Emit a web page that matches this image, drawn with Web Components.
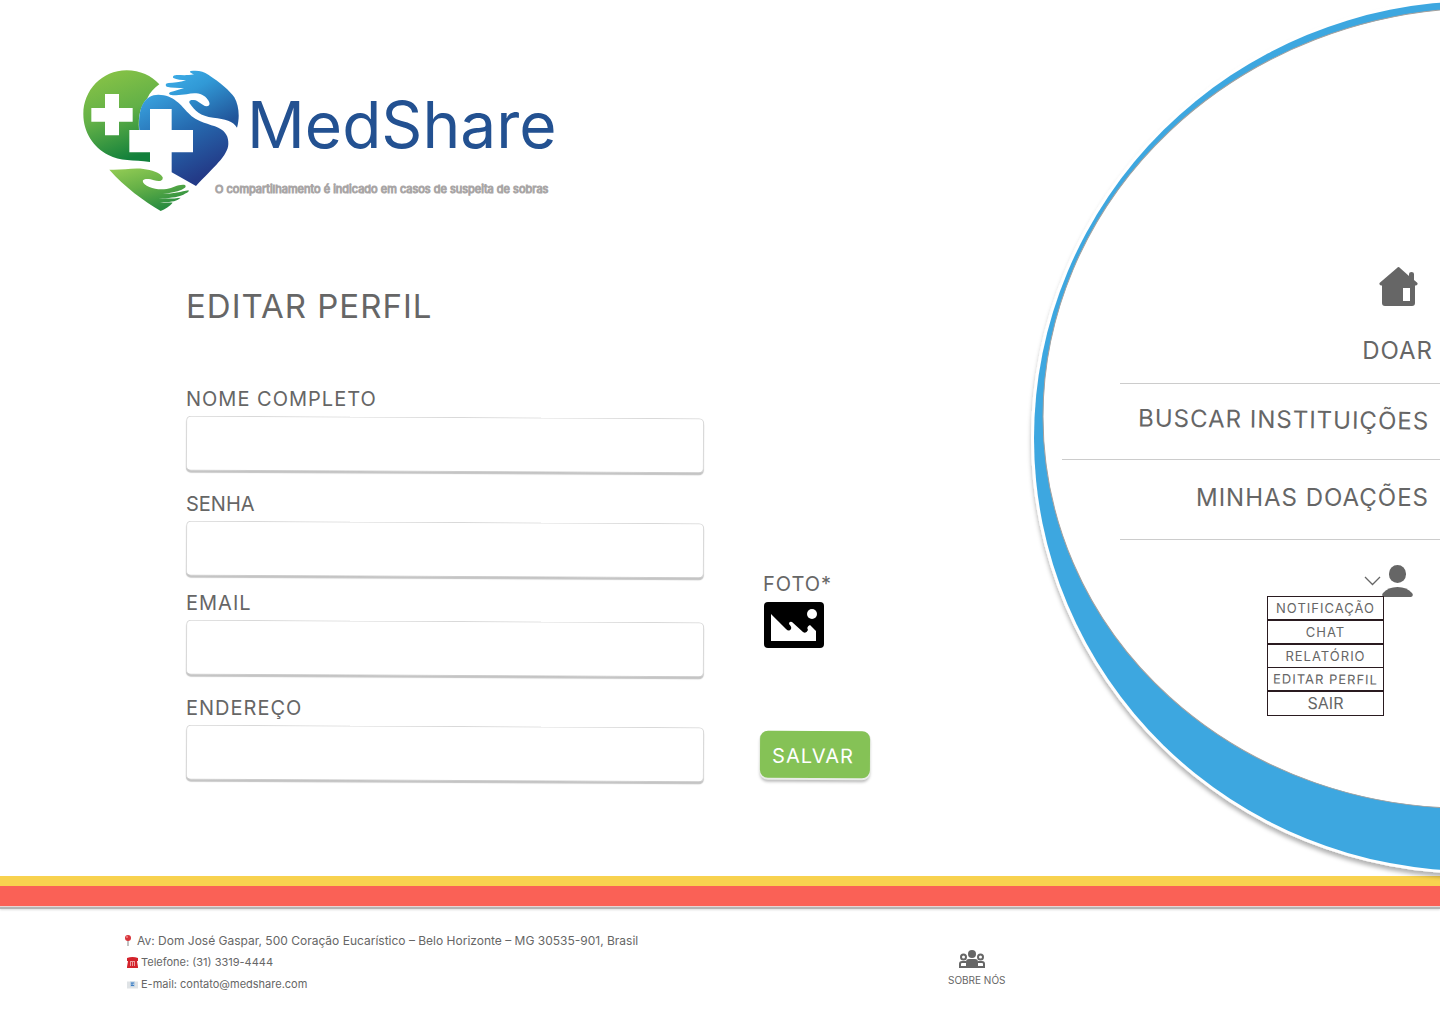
<!DOCTYPE html>
<html lang="pt-BR">
<head>
<meta charset="utf-8">
<title>MedShare – Editar perfil</title>
<style>
  body { margin: 0; background: #fff; color: #666; font-family: Inter, "Liberation Sans", sans-serif; }
</style>
</head>
<body>
<ms-page>
  <ms-brand slot="brand" name="MedShare">O compartilhamento é indicado em casos de suspeita de sobras</ms-brand>
  <ms-profile-form slot="content"></ms-profile-form>
  <ms-nav slot="nav"></ms-nav>
  <ms-footer slot="footer"></ms-footer>
</ms-page>

<script>
class Base extends HTMLElement {
  connectedCallback() {
    if (this.shadowRoot) return;
    this.attachShadow({ mode: 'open' }).innerHTML =
      '<style>*,*::before{box-sizing:border-box}:host{display:block}</style>' + this.view();
  }
}

customElements.define('ms-page', class extends Base {
  view() {
    return `<style>
      :host { display: flex; flex-direction: column; min-height: 100vh; overflow-x: clip; }
      .top { display: grid; grid-template-columns: minmax(0, 1fr) 410px; }
      main { padding: 70px 0 95px 83px; }
      .content { padding: 75px 0 0 103px; }
      .bands { height: 30px; background: linear-gradient(#f8d24f 10px, #fa6156 10px); box-shadow: 0 1px 0 #e8d5d3, 0 3px 0 #b4b4b4, 0 4px 2px #ddd; }
    </style>
    <div class="top">
      <main><slot name="brand"></slot><div class="content"><slot name="content"></slot></div></main>
      <slot name="nav"></slot>
    </div>
    <div class="bands"></div>
    <slot name="footer"></slot>`;
  }
});

customElements.define('ms-brand', class extends Base {
  view() {
    return `<style>
      :host { display: grid; grid-template-columns: 132px 32px 1fr; grid-template-rows: 112px 29px; }
      svg { grid-area: 1 / 1 / 3 / 3; width: 156px; height: 141px; }
      .name { grid-area: 1 / 3; font-size: 64px; line-height: 110px; color: #235191; }
      .tag { grid-area: 2 / 2 / 3 / 4; font-size: 11px; line-height: 14px; color: #a9a6a6; -webkit-text-stroke: 1px #a9a6a6; white-space: nowrap; }
    </style>
    <svg viewBox="39 43 468 423" aria-hidden="true">
      <defs>
        <linearGradient id="g" x1=".2" y1="0" x2=".5" y2="1"><stop offset="0" stop-color="#8ac446"/><stop offset=".5" stop-color="#62b047"/><stop offset="1" stop-color="#12803b"/></linearGradient>
        <linearGradient id="b" x1="0" y1="0" x2=".5" y2="1"><stop offset="0" stop-color="#3aa7e3"/><stop offset=".5" stop-color="#266bb0"/><stop offset="1" stop-color="#233a87"/></linearGradient>
        <linearGradient id="h" x1="0" y1="0" x2=".7" y2="1"><stop offset="0" stop-color="#3fb0ea"/><stop offset=".4" stop-color="#3199d6"/><stop offset="1" stop-color="#21559a"/></linearGradient>
        <linearGradient id="l" x1="0" y1="0" x2=".5" y2="1"><stop offset="0" stop-color="#95cd55"/><stop offset=".5" stop-color="#66b147"/><stop offset="1" stop-color="#2a8d40"/></linearGradient>
      </defs>
      <path fill="url(#g)" d="M268 86C245 60 210 44 170 44C95 44 40 105 40 175C40 230 70 275 115 298C150 317 190 312 240 319V290H178V223H207C204 180 212 148 232 128C240 110 252 98 268 86Z"/>
      <path fill="#fff" d="M105 115h42v42h41v41h-41v41h-42v-41h-41v-41h41z"/>
      <path fill="url(#b)" d="M208 223C203 150 225 118 265 117C310 117 335 150 355 172C380 200 420 205 445 216C468 226 476 245 475 265C474 300 430 335 378 391L305 350V290H369V223H305V160H240V223Z"/>
      <path fill="url(#h)" d="M501 216C490 196 465 190 430 186C390 182 375 165 359 143C355 135 362 132 372 133C385 134 395 150 410 152C420 152 421 143 414 133C400 112 375 110 350 116C335 118 315 120 300 117C294 114 298 109 305 108C315 106 330 100 342 97C325 96 305 97 290 93C284 88 288 82 296 82C310 82 330 80 348 74C335 73 320 72 310 67C306 62 312 58 320 58C335 58 350 60 372 56C364 53 356 49 362 46C385 43 400 47 415 57C450 80 480 105 493 125C507 150 510 185 501 216Z"/>
      <path fill="url(#l)" d="M118 342C150 345 190 335 220 340C245 343 270 350 278 365C280 378 265 378 252 374C240 370 225 368 219 374C216 380 225 388 238 394C255 402 275 402 290 400C310 397 325 385 345 388C350 393 345 398 335 402C320 408 300 412 278 415C310 414 335 408 355 404C360 408 350 412 340 417C320 426 295 427 265 428C295 430 318 428 332 426C322 437 300 440 270 439C285 442 300 440 308 441C300 452 285 460 272 466C220 435 165 395 118 342Z"/>
    </svg>
    <span class="name">${this.getAttribute('name')}</span>
    <span class="tag"><slot></slot></span>`;
  }
});

customElements.define('ms-field', class extends Base {
  view() {
    return `<style>
      :host { display: flex; flex-direction: column; gap: 6px; }
      label { font-size: 20px; line-height: 24px; letter-spacing: 1px; }
      :host([type="password"]) label { letter-spacing: 0; }
      input { width: 100%; height: 55px; padding: 0 16px; font: inherit; font-size: 18px; color: #666; background: #fff; border: 1px solid #d9d9d9; border-bottom-color: #ccc; border-radius: 5px; box-shadow: 0 2px 1px #c4c4c4; outline: none; transform: rotate(.3deg); }
    </style>
    <label for="f">${this.getAttribute('label')}</label>
    <input id="f" type="${this.getAttribute('type') || 'text'}">`;
  }
});

customElements.define('ms-photo', class extends Base {
  view() {
    return `<style>
      label { display: flex; flex-direction: column; gap: 6px; font-size: 20px; line-height: 24px; letter-spacing: 1px; cursor: pointer; }
      input { position: absolute; width: 1px; height: 1px; opacity: 0; }
      svg { width: 61px; height: 46px; }
    </style>
    <label for="p">FOTO*
      <svg viewBox="0 0 61 46" aria-hidden="true"><rect x="1" width="60" height="46" rx="4"/><circle cx="49" cy="12" r="5" fill="#fff"/><path fill="#fff" d="M8 12L23 27Q26 30 28 27Q29 25 26 22Q26 19 29 20L40 30Q43 32 45 28Q43 25 47 23L53 29V39H8Z"/></svg>
    </label><input id="p" type="file" accept="image/*">`;
  }
});

customElements.define('ms-button', class extends Base {
  view() {
    return `<style>
      button { width: 110px; height: 47px; padding: 2px 4px 0 0; border: 0; border-radius: 8px; background: #85c256; color: #fff; font: inherit; font-size: 20px; letter-spacing: 1px; box-shadow: 0 1px 0 1px #e9ece7, 0 4px 3px #bbb; transform: rotate(.3deg); cursor: pointer; }
    </style><button type="button"><slot></slot></button>`;
  }
});

customElements.define('ms-profile-form', class extends Base {
  view() {
    return `<style>
      h1 { margin: 0 0 61px; font-size: 33px; line-height: 40px; font-weight: 400; letter-spacing: 1px; }
      form { display: grid; grid-template-columns: minmax(0, 518px) 110px; gap: 56px; }
      .fields, .side { display: flex; flex-direction: column; }
      .fields { gap: 14px; }
      .group { display: flex; flex-direction: column; gap: 20px; }
      .side { justify-content: flex-end; gap: 83px; padding-bottom: 3px; }
      ms-photo { padding-left: 3px; }
    </style>
    <h1>EDITAR PERFIL</h1>
    <form>
      <div class="fields">
        <div class="group"><ms-field label="NOME COMPLETO"></ms-field><ms-field label="SENHA" type="password"></ms-field></div>
        <div class="group"><ms-field label="EMAIL" type="email"></ms-field><ms-field label="ENDEREÇO"></ms-field></div>
      </div>
      <div class="side"><ms-photo></ms-photo><ms-button>SALVAR</ms-button></div>
    </form>`;
  }
});

customElements.define('ms-account-menu', class extends Base {
  view() {
    return `<style>
      :host { display: flex; flex-direction: column; align-items: flex-end; }
      button { display: flex; align-items: center; gap: 1px; margin-right: 27px; padding: 0; border: 0; background: none; }
      ul { width: 117px; margin: -1px 56px 0 0; padding: 0; list-style: none; border: solid #2a1b20; border-width: 1px 1px 0; }
      li { border-bottom: 1px solid #2a1b20; }
      li.thick { border-bottom-width: 2px; }
      a { display: block; text-align: center; font-size: 13px; line-height: 22px; letter-spacing: 1px; color: #666; text-decoration: none; white-space: nowrap; }
      .tilt { transform: rotate(.5deg); }
      .big { font-size: 16px; line-height: 23px; letter-spacing: 0; }
    </style>
    <button type="button" aria-label="Conta" aria-expanded="true">
      <svg width="17" height="10" viewBox="0 0 17 10" fill="none" stroke="#666"><path stroke-width="1.300" d="M1 1l7.500 7.500L16 1"/></svg>
      <svg width="31" height="32" viewBox="0 0 31 32" fill="#666"><rect x="7" width="17" height="18" rx="8.500"/><path d="M2 32Q-1 31 1 28Q6 22 15.500 22T30 28Q32 31 29 32Z"/></svg>
    </button>
    <ul>
      <li class="thick"><a href="#">NOTIFICAÇÃO</a></li><li class="thick"><a href="#">CHAT</a></li><li><a href="#">RELATÓRIO</a></li>
      <li class="thick"><a href="#" class="tilt">EDITAR PERFIL</a></li><li><a href="#" class="big">SAIR</a></li>
    </ul>`;
  }
});

customElements.define('ms-nav', class extends Base {
  view() {
    return `<style>
      :host { position: relative; }
      .disc { position: absolute; top: 0; right: 0; width: 420px; height: 900px; pointer-events: none; }
      nav { position: relative; display: flex; flex-direction: column; align-items: flex-end; padding-top: 267px; }
      .home { display: block; margin-right: 22px; height: 39px; }
      .link { color: #666; font-size: 24px; letter-spacing: 1px; text-decoration: none; white-space: nowrap; padding-right: 11px; }
      .doar { line-height: 64px; margin-top: 13px; padding-right: 7px; }
      .buscar { line-height: 71px; padding-bottom: 4px; transform: rotate(.6deg); }
      .minhas { line-height: 75px; padding-bottom: 4px; }
      hr { width: 320px; height: 1px; margin: 0; border: 0; background: #ccc; }
      hr.long { width: 378px; }
      ms-account-menu { margin-top: 25px; }
    </style>
    <svg class="disc" viewBox="1020 0 420 900" aria-hidden="true">
      <defs>
        <filter id="s" x="-5%" y="-5%" width="110%" height="110%"><feDropShadow dx="0" dy="4" stdDeviation="2" flood-opacity=".3"/></filter>
      </defs>
      <g filter="url(#s)"><ellipse rx="445" ry="438" fill="#fff" transform="translate(1476 436) skewY(-.3)"/></g>
      <ellipse rx="442" ry="435" fill="#3da7e0" transform="translate(1476 436) skewY(-.3)"/>
      <ellipse rx="432" ry="400" fill="#fff" stroke="#a4a09d" transform="translate(1475 408) skewY(-1.150)"/>
    </svg>
    <nav>
      <a class="home" href="#" aria-label="Início"><svg width="39" height="39" viewBox="0 0 39 39" fill="#666"><path fill-rule="evenodd" d="M18 1Q19.500-1 21 1L30 9V7Q30 5 32.500 5Q35 5 35 7V13L38.500 16Q39 19 36 18.500V36Q36 39 33 39H6Q3 39 3 36V18.500Q0 19 .5 16ZM24 21V34H31V21Z"/></svg></a>
      <a class="link doar" href="#">DOAR</a><hr>
      <a class="link buscar" href="#">BUSCAR INSTITUIÇÕES</a><hr class="long">
      <a class="link minhas" href="#">MINHAS DOAÇÕES</a><hr>
      <ms-account-menu></ms-account-menu>
    </nav>`;
  }
});

customElements.define('ms-footer', class extends Base {
  view() {
    return `<style>
      footer { display: grid; grid-template-columns: minmax(0, 1fr) 492px; padding: 26px 0 20px 122px; }
      address { display: flex; flex-direction: column; gap: 5px; font-style: normal; font-size: 11px; line-height: 17px; }
      .row { display: flex; align-items: center; gap: 3px; padding-left: 5px; }
      .first { font-size: 12px; padding-left: 0; gap: 4px; }
      a { color: #666; text-decoration: none; }
      .about { justify-self: start; display: flex; flex-direction: column; align-items: center; gap: 6px; padding-top: 18px; font-size: 10px; line-height: 12px; }
      .about svg { margin-right: 10px; }
    </style>
    <footer>
      <address>
        <div class="row first"><svg width="11" height="12" viewBox="0 0 11 12"><path stroke="#999" stroke-width="1.200" d="M6 5V11"/><circle cx="6" cy="3" r="3" fill="#d8343b"/><circle cx="5" cy="2" r="1" fill="#f08a8a"/></svg><span>Av: Dom José Gaspar, 500 Coração Eucarístico – Belo Horizonte – MG 30535-901, Brasil</span></div>
        <div class="row"><svg width="11" height="11" viewBox="0 0 11 11"><path fill="#d3222b" d="M0 1Q5.500-1 11 1V4H10L11 10V11H0V10L1 4H0Z"/><path stroke="#f3b9b9" stroke-width=".8" d="M3 4.500H8M3.500 5V9M5.500 5V9M7.500 5V9"/></svg><span>Telefone: (31) 3319-4444</span></div>
        <div class="row"><svg width="11" height="8" viewBox="0 0 11 8"><rect width="11" height="7" y=".5" fill="#dfe3e6"/><path fill="#b9cfe3" d="M3 .5h5v5H3z"/><path stroke="#3f7fc4" d="M4 2H7M5 2V5M4 4.500H7"/></svg><span>E-mail: <a href="mailto:contato@medshare.com">contato@medshare.com</a></span></div>
      </address>
      <a class="about" href="#"><svg width="26" height="18" viewBox="0 0 26 18" fill="#666"><circle cx="13" cy="4" r="4"/><path d="M7 18V12Q7 9 10 9H16Q19 9 19 12V18Z"/><circle cx="4.500" cy="7" r="2.500" fill="none" stroke="#666" stroke-width="2"/><circle cx="21.500" cy="7" r="2.500" fill="none" stroke="#666" stroke-width="2"/><path fill="none" stroke="#666" stroke-width="2" d="M7 17H1V14Q1 12 3 12H7M19 17H25V14Q25 12 23 12H19"/></svg>SOBRE NÓS</a>
    </footer>`;
  }
});
</script>
</body>
</html>
